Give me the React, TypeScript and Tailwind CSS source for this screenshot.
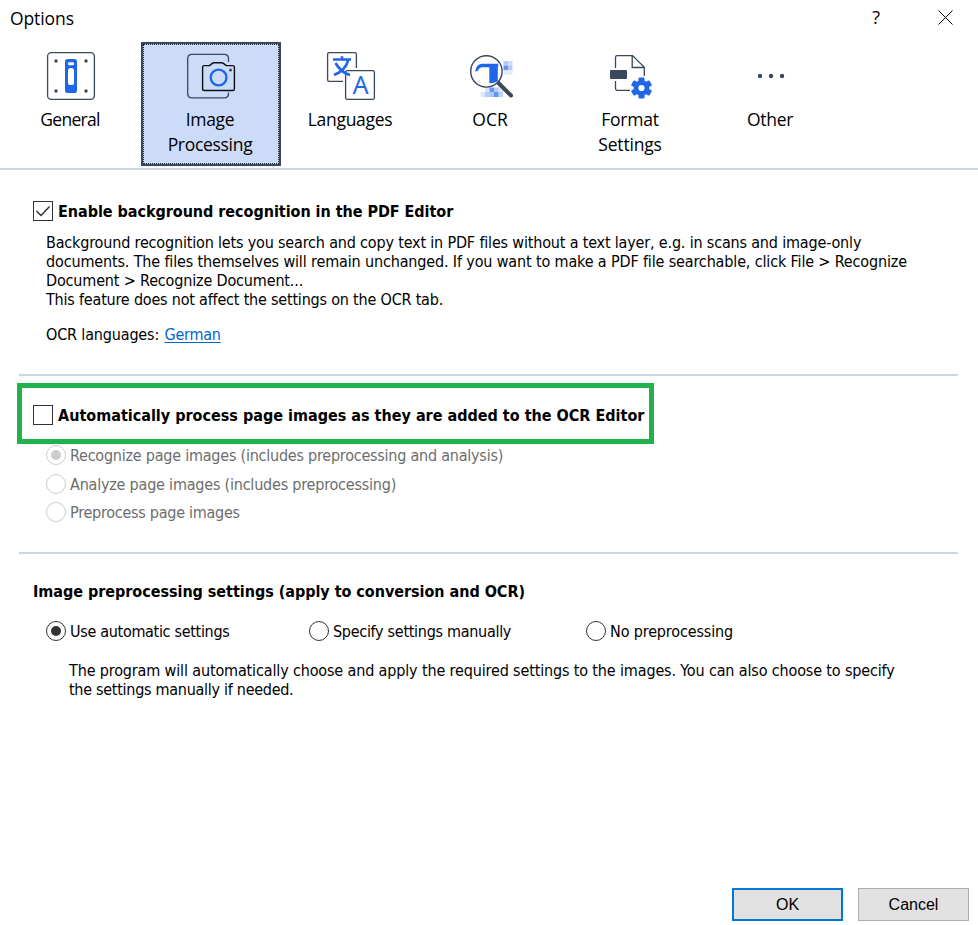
import type { ReactNode } from "react";

const INK = "#39485a";
const BLUE = "#1f66e8";

function GeneralIcon() {
  return (
    <svg width="60" height="52" viewBox="41 50 60 52" fill="none">
      <rect x="47.6" y="52.6" width="46.8" height="46.8" rx="3.6" stroke={INK} strokeWidth="1.3" />
      <g fill={INK}>
        <circle cx="56" cy="61" r="1.7" />
        <circle cx="86" cy="61" r="1.7" />
        <circle cx="56" cy="91" r="1.7" />
        <circle cx="86" cy="91" r="1.7" />
      </g>
      <rect x="65" y="59" width="12" height="34" rx="2.8" fill={BLUE} />
      <rect x="68" y="62.3" width="6" height="3" rx="1.2" fill="#fff" />
      <rect x="68" y="68" width="6" height="17" rx="2.6" fill="#fff" />
    </svg>
  );
}

function ImageIcon() {
  return (
    <svg width="60" height="52" viewBox="181 50 60 52" fill="none">
      <path d="M228.5 62V58.5Q228.5 54.3 224.3 54.3H192Q187.7 54.3 187.7 58.5V93.5Q187.7 97.8 192 97.8H224.3Q228.5 97.8 228.5 93.5V92.5" stroke={INK} strokeWidth="1.3" />
      <path d="M204.2 65.6H209.5L212 63.6Q213 62.8 214.2 62.8H221.5Q222.7 62.8 223.7 63.6L226.2 65.6H232.8Q234.4 65.6 234.4 67.2V89Q234.4 90.5 232.8 90.5H204.2Q202.6 90.5 202.6 89V67.2Q202.6 65.6 204.2 65.6Z" stroke="#0b1017" strokeWidth="1.4" />
      <circle cx="218.6" cy="77.5" r="7.9" stroke={BLUE} strokeWidth="2.4" />
      <circle cx="230.5" cy="70" r="1.5" fill={INK} />
    </svg>
  );
}

function LanguagesIcon() {
  return (
    <svg width="60" height="52" viewBox="321 50 60 52" fill="none">
      <path d="M356.4 68V54.2Q356.4 52.6 354.8 52.6H329.2Q327.6 52.6 327.6 54.2V79.8Q327.6 81.4 329.2 81.4H343" stroke={INK} strokeWidth="1.3" />
      <rect x="345.6" y="70.6" width="28.800" height="28.8" rx="1.6" stroke={INK} strokeWidth="1.3" />
      <path d="M333 59.5H351M342 56.2V59.5M348.2 60.2C346.5 66.5 341.500 72.300 334 75M335.500 63C339 69.300 343.500 73.200 350 75" stroke={BLUE} strokeWidth="2.6" />
      <text x="360.600" y="94" textAnchor="middle" fontFamily="Open Sans, sans-serif" fontSize="25" fontWeight="500" fill={BLUE} stroke={BLUE} strokeWidth=".2">A</text>
    </svg>
  );
}

function OcrIcon() {
  return (
    <svg width="60" height="52" viewBox="461 50 60 52" fill="none">
      <g fill="#5c8eee">
        <rect x="503.5" y="61" width="4.500" height="4.500" opacity=".45" />
        <rect x="508" y="61" width="4.500" height="4.500" opacity=".3" />
        <rect x="503.500" y="65.500" width="4.500" height="4.500" opacity=".95" />
        <rect x="508" y="65.500" width="4.500" height="4.500" opacity=".45" />
        <rect x="503.500" y="70" width="4.500" height="4.500" opacity=".2" />
        <rect x="508" y="70" width="4.500" height="4.500" opacity=".18" />
        <rect x="489.500" y="87.500" width="4.500" height="4.500" opacity=".9" />
        <rect x="494" y="87.500" width="4.500" height="4.500" opacity=".45" />
        <rect x="485" y="87.500" width="4.500" height="4.500" opacity=".25" />
        <rect x="480.500" y="92" width="4.500" height="5" opacity=".2" />
        <rect x="485" y="92" width="4.500" height="5" opacity=".45" />
        <rect x="489.500" y="92" width="4.500" height="5" opacity=".5" />
        <rect x="494" y="92" width="4.500" height="5" opacity=".95" />
        <rect x="498.500" y="92" width="4.500" height="5" opacity=".4" />
        <rect x="498.500" y="87.500" width="4.500" height="4.500" opacity=".2" />
      </g>
      <path d="M498 82.500L511 95.500" stroke={INK} strokeWidth="4" strokeLinecap="round" />
      <circle cx="486.400" cy="71.400" r="15.700" fill="#fff" stroke={INK} strokeWidth="1.400" />
      <path d="M475.300 71.500Q476 63.800 482.500 63.800H498.200V67H497.800V81.300Q494 83.500 489.300 83.300V67.300H482.500Q478.800 67.300 478 71Z" fill={BLUE} />
    </svg>
  );
}

function FormatIcon() {
  return (
    <svg width="60" height="52" viewBox="601 50 60 52" fill="none">
      <path d="M615.500 68V57.200Q615.500 55.600 617.100 55.600H632.500L644.300 67.300V76M615.500 81V88.500Q615.500 90.300 617.100 90.300H630M632.200 55.600V67.500H644.300" stroke={INK} strokeWidth="1.300" />
      <rect x="610" y="70" width="17" height="9" rx="1" fill={INK} />
      <g fill={BLUE}>
        <circle cx="641.500" cy="88" r="7.800" />
        <rect x="638.500" y="77.400" width="6" height="21.200" rx="1" />
        <rect x="638.500" y="77.400" width="6" height="21.200" rx="1" transform="rotate(60 641.500 88)" />
        <rect x="638.500" y="77.400" width="6" height="21.200" rx="1" transform="rotate(120 641.500 88)" />
      </g>
      <circle cx="641.500" cy="88" r="3.100" fill="#fff" />
    </svg>
  );
}

function OtherIcon() {
  return (
    <svg width="60" height="52" viewBox="741 50 60 52" fill={INK}>
      <circle cx="760" cy="76" r="2.200" />
      <circle cx="771" cy="76" r="2.200" />
      <circle cx="782" cy="76" r="2.200" />
    </svg>
  );
}

function Tab({ icon, lines, selected = false, tracking = "tracking-[-0.3px]" }: { icon: ReactNode; lines: string[]; selected?: boolean; tracking?: string }) {
  return (
    <button
      className={
        selected
          ? "flex h-[124px] w-[140px] flex-col border-2 border-[#39485a] bg-[#ccdbf8]"
          : "flex h-[124px] w-[140px] flex-col border-2 border-transparent"
      }
    >
      <span
        className={
          selected
            ? "flex w-full flex-1 flex-col items-center border border-dotted border-[#1c2633] pt-[5px]"
            : "flex w-full flex-1 flex-col items-center border border-transparent pt-[5px]"
        }
      >
        {icon}
        <span className={`mt-[5px] flex flex-col items-center pr-[2px] text-[17.5px] leading-[25px] ${tracking}`}>
          {lines.map((l) => (
            <span key={l}>{l}</span>
          ))}
        </span>
      </span>
    </button>
  );
}

function Checkbox({ checked = false, className = "", children }: { checked?: boolean; className?: string; children: ReactNode }) {
  return (
    <label className={`flex h-5 items-center gap-[5px] font-bold ${className}`}>
      <span className="flex size-5 shrink-0 items-center justify-center border border-[#333]">
        {checked && (
          <svg width="18" height="18" viewBox="0 0 18 18" fill="none">
            <path d="M2.500 9L7 13.500L15.500 4.500" stroke="#333" strokeWidth="1.500" />
          </svg>
        )}
      </span>
      <span className="whitespace-nowrap">{children}</span>
    </label>
  );
}

function Radio({ checked = false, disabled = false, className = "", children }: { checked?: boolean; disabled?: boolean; className?: string; children: ReactNode }) {
  return (
    <label className={`flex h-5 items-center gap-1 ${disabled ? "text-[#6d6d6d]" : ""} ${className}`}>
      <span className={`flex size-5 shrink-0 items-center justify-center rounded-full border ${disabled ? "border-[#ccc]" : "border-[#333]"}`}>
        {checked && <span className={`size-[10px] rounded-full ${disabled ? "bg-[#ccc]" : "bg-[#333]"}`} />}
      </span>
      <span className="whitespace-nowrap">{children}</span>
    </label>
  );
}

export default function App() {
  return (
    <div className="flex h-[925px] w-[978px] flex-col overflow-hidden bg-white font-['DejaVu_Sans_Condensed',sans-serif] text-[16px] leading-[19px] text-black">
      <header className="flex h-[42px] items-start justify-between pl-[10px] pr-[24px] font-['Open_Sans',sans-serif]">
        <h1 className="mt-[6px] text-[17.5px] leading-[25px] tracking-[-0.1px]">Options</h1>
        <div className="flex items-start gap-[57px]">
          <span className="mt-[5px] font-['Open_Sans',sans-serif] text-[18px] leading-[24px]">?</span>
          <svg className="mt-[10px]" width="17" height="16" viewBox="0 0 17 16">
            <path d="M1.500 0.500L15.500 14.500M15.500 0.500L1.500 14.500" stroke="#000" strokeWidth="1" />
          </svg>
        </div>
      </header>

      <nav className="flex h-[128px] border-b-2 border-[#ccd6e0] pl-[1px] font-['Open_Sans',sans-serif]">
        <Tab icon={<GeneralIcon />} lines={["General"]} tracking="tracking-[-0.7px]" />
        <Tab icon={<ImageIcon />} lines={["Image", "Processing"]} selected />
        <Tab icon={<LanguagesIcon />} lines={["Languages"]} />
        <Tab icon={<OcrIcon />} lines={["OCR"]} tracking="tracking-normal" />
        <Tab icon={<FormatIcon />} lines={["Format", "Settings"]} tracking="tracking-[-0.2px]" />
        <Tab icon={<OtherIcon />} lines={["Other"]} />
      </nav>

      <main className="flex flex-1 flex-col">
        <section className="mt-[31px] h-[173px] pl-[33px]">
          <Checkbox checked className="tracking-[-0.04px]">Enable background recognition in the PDF Editor</Checkbox>
          <div className="mt-[12px] pl-[13px] whitespace-nowrap tracking-[-0.16px]">
            <p className="tracking-[-0.173px]">
              Background recognition lets you search and copy text in PDF files without a text layer, e.g. in scans and image-only
            </p>
            <p className="tracking-[-0.146px]">
              documents. The files themselves will remain unchanged. If you want to make a PDF file searchable, click File &gt; Recognize
            </p>
            <p>Document &gt; Recognize Document...</p>
            <p className="tracking-[-0.2px]">This feature does not affect the settings on the OCR tab.</p>
            <p className="mt-[16px]">
              OCR languages: <a className="ml-px tracking-[-0.25px] text-[#0066cc] underline underline-offset-2">German</a>
            </p>
          </div>
        </section>

        <hr className="ml-[19px] w-[939px] border-t-2 border-[#ccd6e0]" />

        <section className="h-[176px]">
          <div className="ml-[17px] mt-[7px] flex h-[61px] w-[637px] items-center border-[5px] border-[#22b14c] pl-[11px] pt-[3px]">
            <Checkbox>Automatically process page images as they are added to the OCR Editor</Checkbox>
          </div>
          <div className="mt-[1px] pl-[46px]">
            <Radio checked disabled className="tracking-[-0.23px]">Recognize page images (includes preprocessing and analysis)</Radio>
            <Radio disabled className="mt-[9px] tracking-[-0.21px]">Analyze page images (includes preprocessing)</Radio>
            <Radio disabled className="mt-[8px] tracking-[-0.26px]">Preprocess page images</Radio>
          </div>
        </section>

        <hr className="ml-[19px] w-[939px] border-t-2 border-[#ccd6e0]" />

        <section className="pl-[33px] pt-[28px]">
          <h2 className="font-bold tracking-[-0.035px]">Image preprocessing settings (apply to conversion and OCR)</h2>
          <div className="mt-[20px] flex pl-[13px]">
            <Radio checked className="w-[263px] tracking-[-0.31px]">Use automatic settings</Radio>
            <Radio className="w-[277px] tracking-[-0.29px]">Specify settings manually</Radio>
            <Radio className="tracking-[-0.14px]">No preprocessing</Radio>
          </div>
          <div className="mt-[20px] pl-[36px] whitespace-nowrap">
            <p className="tracking-[-0.143px]">
              The program will automatically choose and apply the required settings to the images. You can also choose to specify
            </p>
            <p className="tracking-[-0.28px]">the settings manually if needed.</p>
          </div>
        </section>
      </main>

      <footer className="flex justify-end gap-[15px] pb-[4px] pr-[9px] font-['Liberation_Sans',sans-serif]">
        <button className="h-[33px] w-[111px] border-2 border-[#0078d7] bg-[#e1e1e1]">OK</button>
        <button className="h-[33px] w-[111px] border border-[#adadad] bg-[#e1e1e1]">Cancel</button>
      </footer>
    </div>
  );
}
